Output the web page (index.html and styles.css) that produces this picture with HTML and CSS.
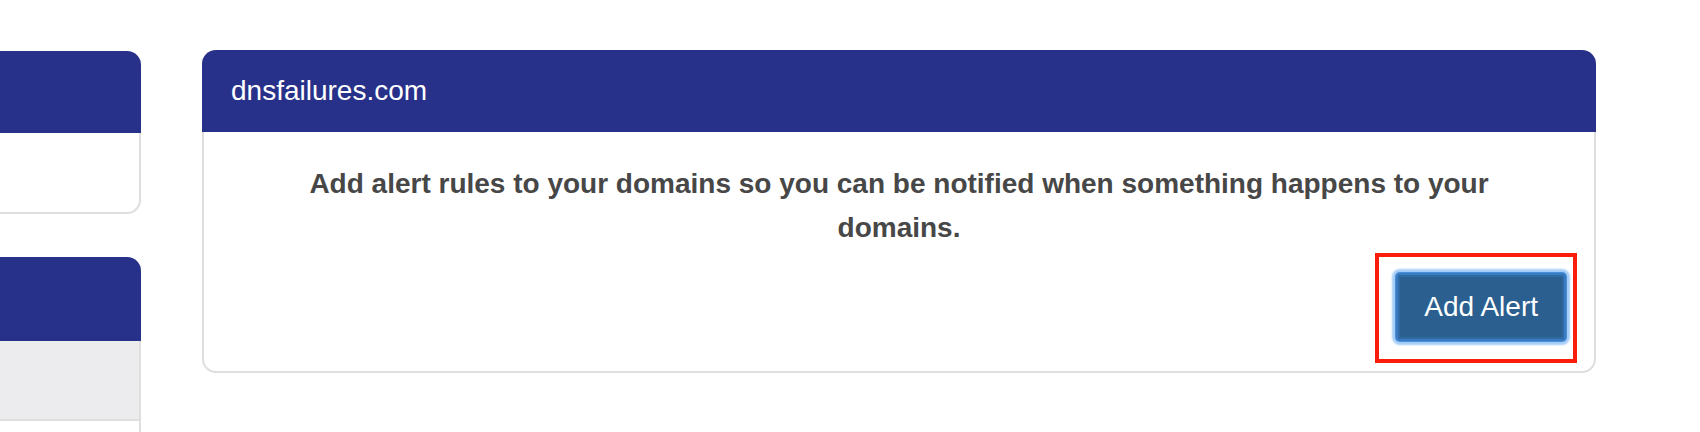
FILE: index.html
```html
<!DOCTYPE html>
<html>
<head>
<meta charset="utf-8">
<link rel="stylesheet" href="styles.css">
</head>
<body>
<div class="page">
  <aside class="sidebar">
    <div class="side-card first">
      <div class="side-head"></div>
      <div class="side-body"></div>
    </div>
    <div class="side-card second">
      <div class="side-head"></div>
      <div class="side-grey"></div>
      <div class="side-rest"></div>
    </div>
  </aside>
  <main class="main">
    <section class="card">
      <header class="card-head">dnsfailures.com</header>
      <div class="card-body">
        <h4 class="message">Add alert rules to your domains so you can be notified when something happens to your domains.</h4>
        <div class="highlight">
          <button class="btn-primary" type="button">Add Alert</button>
        </div>
      </div>
    </section>
  </main>
</div>
</body>
</html>
```
FILE: styles.css
```css
html, body {
  margin: 0;
  padding: 0;
  background: #ffffff;
  font-family: "Liberation Sans", Arial, Helvetica, sans-serif;
  overflow: hidden;
}

.page {
  display: flex;
  align-items: flex-start;
  gap: 61px;
  padding-top: 50px;
  height: 382px;
}

.sidebar {
  width: 201px;
  margin-left: -60px;
  display: flex;
  flex-direction: column;
  gap: 43px;
  padding-top: 1px;
  flex: none;
}

.side-card {
  display: flex;
  flex-direction: column;
}

.side-head {
  height: 82px;
  background: #283189;
  border-radius: 0 14px 0 0;
}

.side-body {
  height: 79px;
  background: #ffffff;
  border: 2px solid #dedede;
  border-top: none;
  border-radius: 0 0 14px 0;
}

.second .side-head {
  height: 84px;
}

.side-grey {
  height: 78px;
  background: #ececee;
  border-right: 2px solid #dedede;
  border-bottom: 2px solid #dedede;
}

.side-rest {
  height: 11px;
  background: #ffffff;
  border-right: 2px solid #dedede;
}

.main {
  width: 1394px;
  flex: none;
}

.card {
  display: flex;
  flex-direction: column;
}

.card-head {
  height: 82px;
  box-sizing: border-box;
  padding: 0 29px;
  display: flex;
  align-items: center;
  background: #283189;
  color: #ffffff;
  font-size: 28px;
  border-radius: 14px 14px 0 0;
}

.card-body {
  display: flex;
  flex-direction: column;
  border: 2px solid #dedede;
  border-top: none;
  border-radius: 0 0 14px 14px;
  padding-top: 30px;
}

.message {
  margin: 0 60px;
  font-size: 28px;
  line-height: 44px;
  font-weight: bold;
  text-align: center;
  color: #474747;
}

.highlight {
  align-self: flex-end;
  margin: 3px 17px 8px 0;
  border: 4px solid #fa1e0a;
  padding: 16px 7px 18px 17px;
}

.btn-primary {
  display: block;
  font-family: "Liberation Sans", Arial, Helvetica, sans-serif;
  font-size: 28px;
  line-height: 40px;
  padding: 12px 26px;
  color: #ffffff;
  background: #2a5f8f;
  border: 2px solid #3a7cc4;
  border-radius: 4px;
  box-shadow: inset 0 0 0 2px #2f6aa3, 0 0 0 1px #4a8ed8, 0 0 2px 4px #a4cdf7;
  cursor: pointer;
}
```
